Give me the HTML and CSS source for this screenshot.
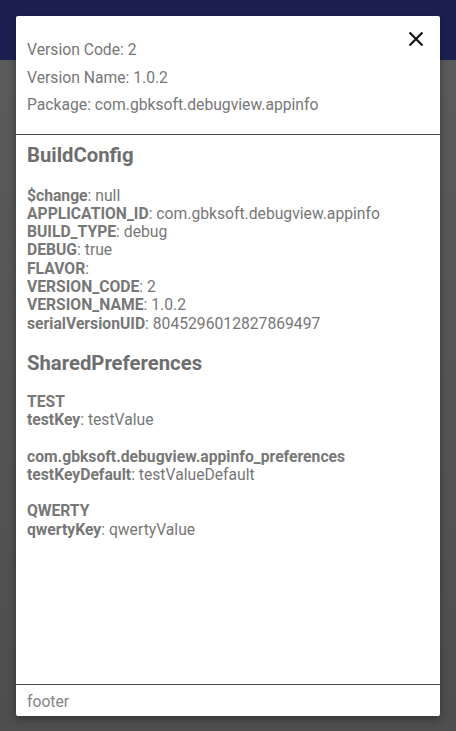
FILE: index.html
```html
<!DOCTYPE html>
<html>
<head>
<meta charset="utf-8">
<link rel="stylesheet" href="styles.css">
</head>
<body>
<div class="appbar"></div>
<div class="screen"></div>
<div class="dialog">
  <div class="header">
    <div class="hline">Version Code: 2</div>
    <div class="hline">Version Name: 1.0.2</div>
    <div class="hline">Package: com.gbksoft.debugview.appinfo</div>
    <button class="close" aria-label="close">
      <svg width="16" height="16" viewBox="0 0 16 16"><path d="M1.5 1.5 L14.5 14.5 M14.5 1.5 L1.5 14.5" stroke="#111" stroke-width="2.1" fill="none"/></svg>
    </button>
  </div>
  <div class="content">
    <div class="heading">BuildConfig</div>
    <div class="group">
      <div class="row"><b>$change</b>: null</div>
      <div class="row"><b>APPLICATION_ID</b>: com.gbksoft.debugview.appinfo</div>
      <div class="row"><b>BUILD_TYPE</b>: debug</div>
      <div class="row"><b>DEBUG</b>: true</div>
      <div class="row"><b>FLAVOR</b>: </div>
      <div class="row"><b>VERSION_CODE</b>: 2</div>
      <div class="row"><b>VERSION_NAME</b>: 1.0.2</div>
      <div class="row"><b>serialVersionUID</b>: 8045296012827869497</div>
    </div>
    <div class="heading">SharedPreferences</div>
    <div class="group">
      <div class="row"><b>TEST</b></div>
      <div class="row"><b>testKey</b>: testValue</div>
    </div>
    <div class="group">
      <div class="row"><b>com.gbksoft.debugview.appinfo_preferences</b></div>
      <div class="row"><b>testKeyDefault</b>: testValueDefault</div>
    </div>
    <div class="group">
      <div class="row"><b>QWERTY</b></div>
      <div class="row"><b>qwertyKey</b>: qwertyValue</div>
    </div>
  </div>
  <div class="footer">footer</div>
</div>
</body>
</html>
```
FILE: styles.css
```css
html, body {
  margin: 0;
  padding: 0;
  height: 100%;
}
body {
  background: #565656;
  font-family: Roboto, "Liberation Sans", sans-serif;
  display: flex;
  flex-direction: column;
}
.appbar {
  height: 60px;
  background: #1c2050;
  flex: none;
}
.screen {
  flex: 1;
  background: linear-gradient(#5b5b5b, #4e4e4e);
}
.dialog {
  position: absolute;
  left: 16px;
  top: 16px;
  width: 424px;
  height: 700px;
  background: #fff;
  border-radius: 2px;
  box-shadow: 0 3px 8px rgba(0,0,0,0.35);
  display: flex;
  flex-direction: column;
  color: #777;
}
.header {
  position: relative;
  padding: 20px 11px 0;
  height: 98px;
  border-bottom: 1px solid #4a4a4a;
  flex: none;
}
.hline {
  font-size: 15.7px;
  line-height: 27.5px;
}
.close {
  position: absolute;
  right: 16px;
  top: 15px;
  width: 16px;
  height: 16px;
  padding: 0;
  border: 0;
  background: none;
  display: block;
}
.close svg {
  display: block;
}
.content {
  flex: 1;
  padding: 8px 11px 0;
}
.heading {
  font-size: 20.3px;
  font-weight: bold;
  line-height: 24px;
  color: #6e6e6e;
  margin-bottom: 19.5px;
}
.group + .heading {
  margin-bottom: 17.5px;
}
.group {
  margin-bottom: 18.3px;
}
.row {
  font-size: 15.7px;
  line-height: 18.3px;
  white-space: pre;
}
.row b {
  font-weight: bold;
}
.footer {
  flex: none;
  border-top: 1px solid #4a4a4a;
  height: 31px;
  padding: 0 11px;
  font-size: 15.7px;
  line-height: 33px;
  color: #858585;
}
```
